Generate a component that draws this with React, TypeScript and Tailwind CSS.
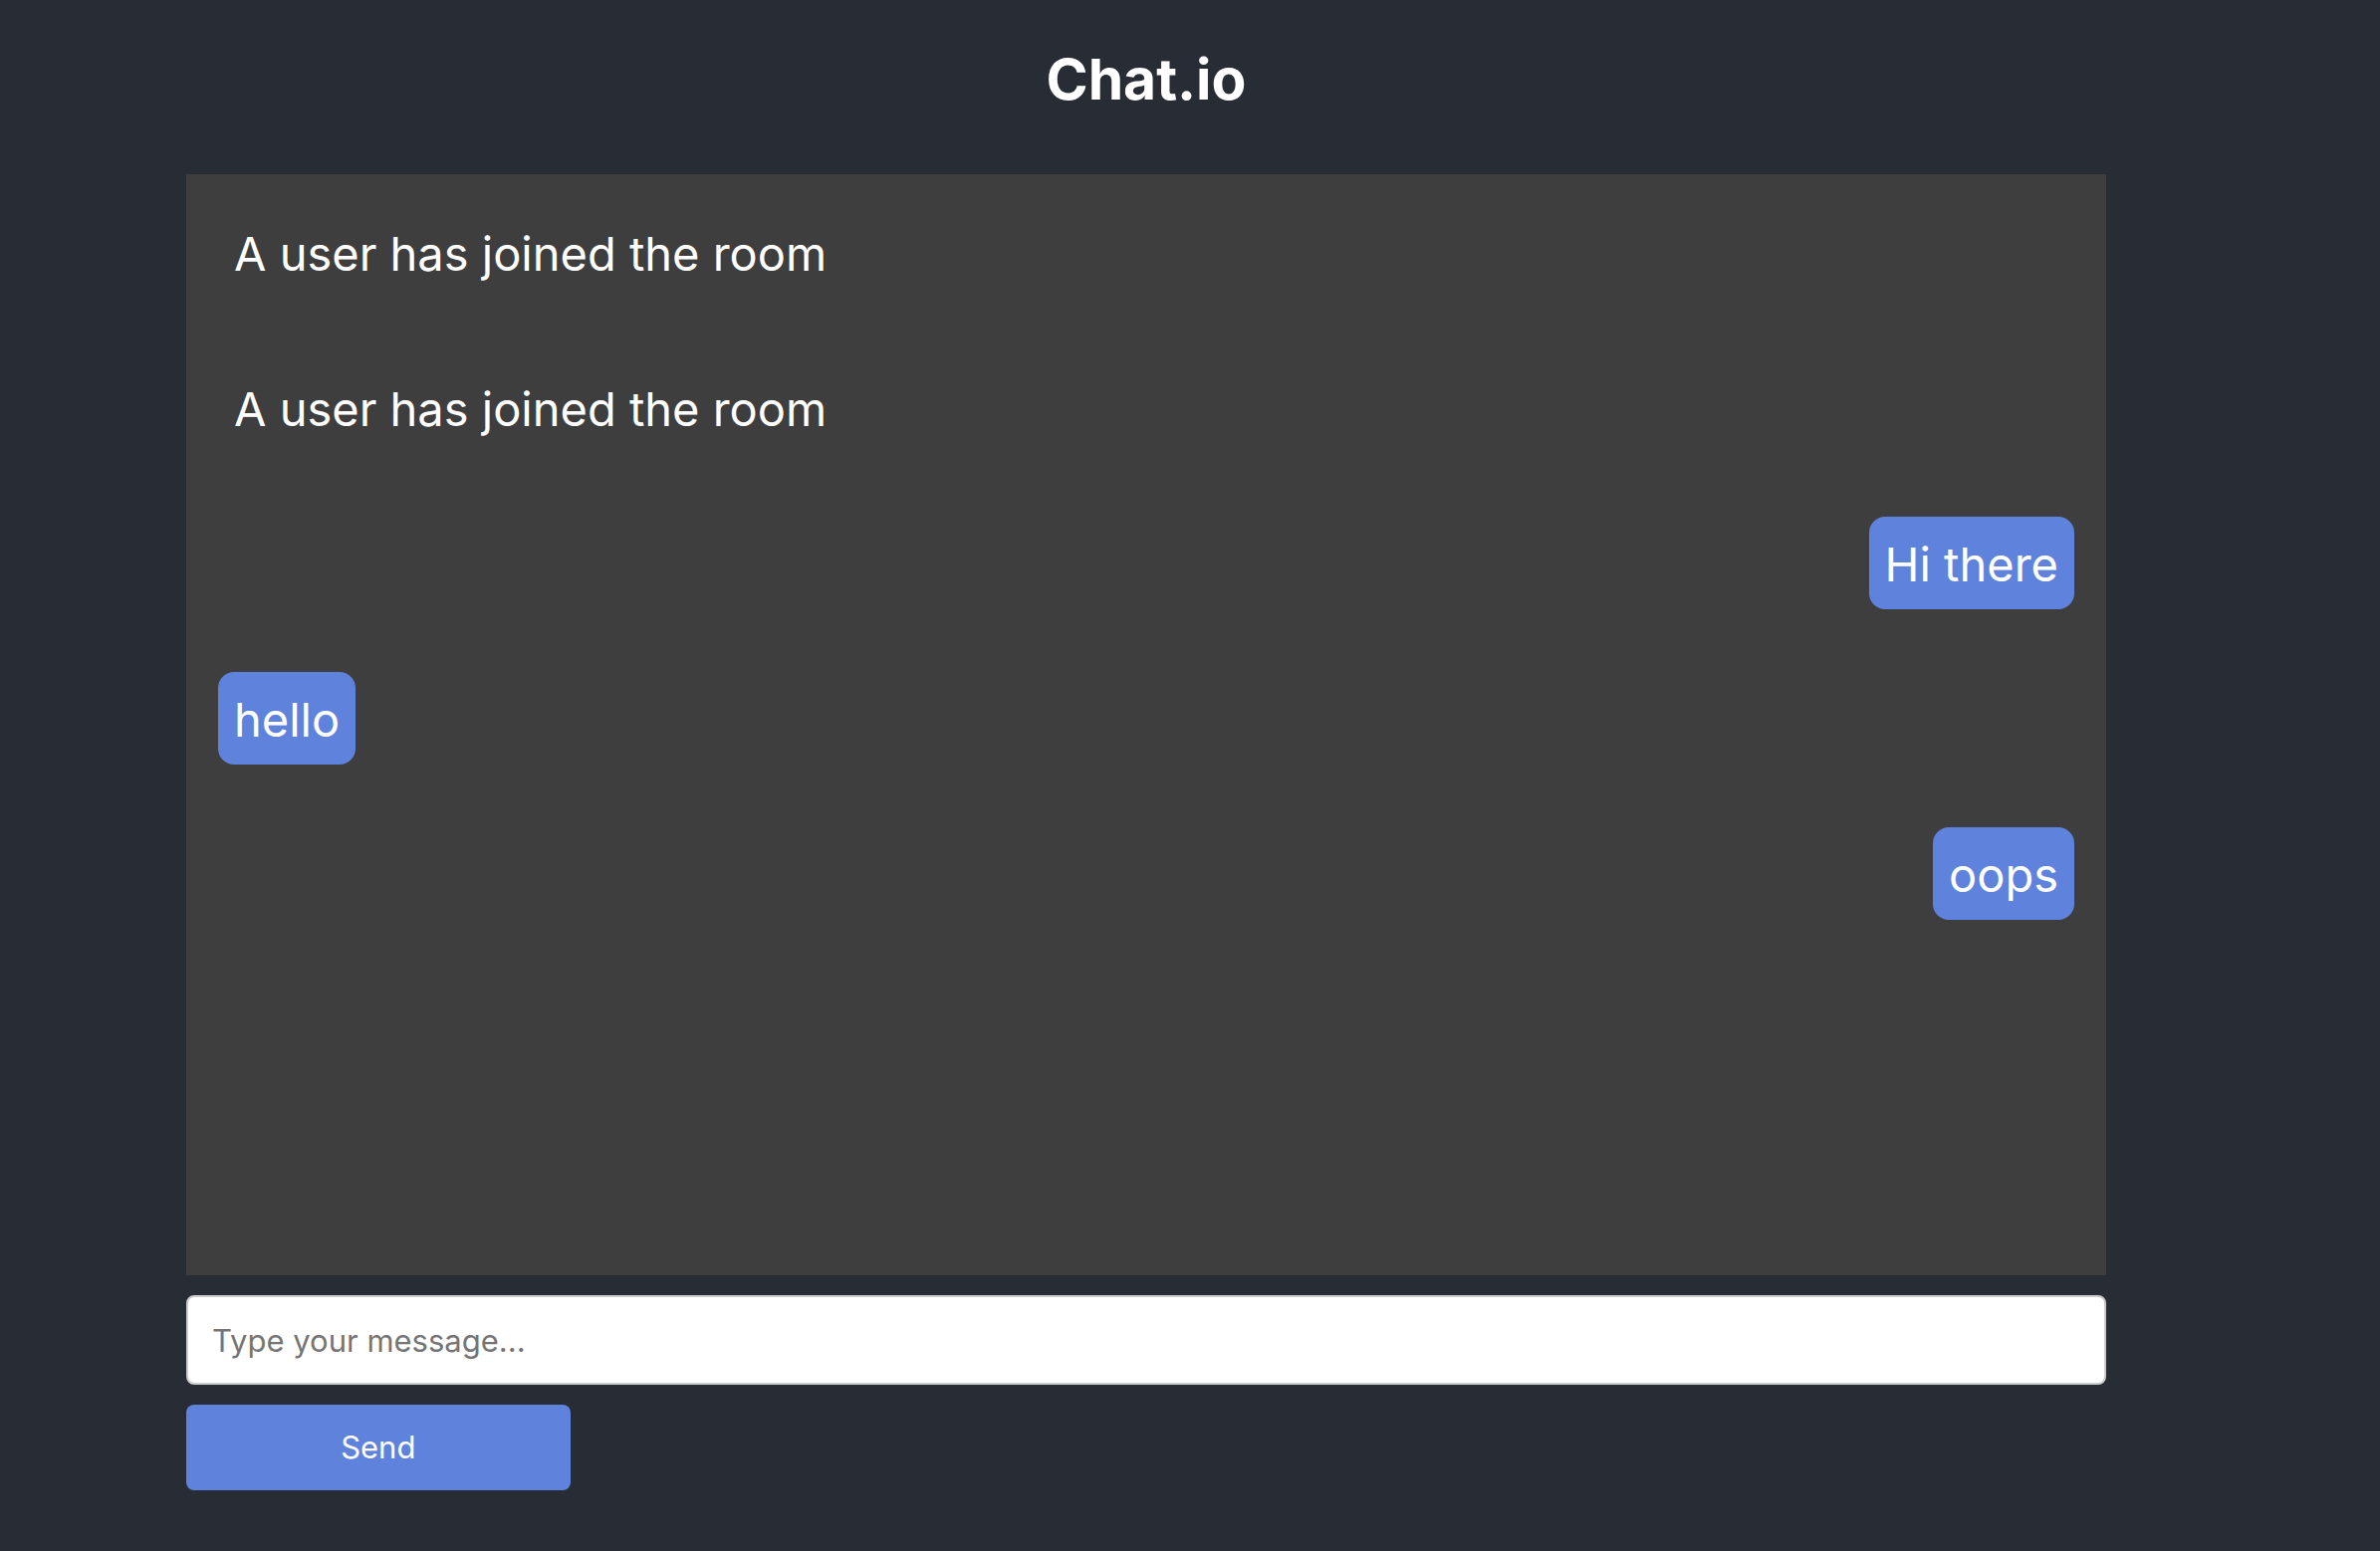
import { useState } from "react";

type Message = { text: string; kind: "notice" | "sent" | "received" };

const initialMessages: Message[] = [
  { text: "A user has joined the room", kind: "notice" },
  { text: "A user has joined the room", kind: "notice" },
  { text: "Hi there", kind: "sent" },
  { text: "hello", kind: "received" },
  { text: "oops", kind: "sent" },
];

const bubbleStyles = {
  notice: "self-start",
  sent: "self-end bg-[#5f83dc]",
  received: "self-start bg-[#5f83dc]",
};

function Bubble({ message }: { message: Message }) {
  return (
    <li className={`rounded-2xl px-4 pt-4 pb-[13px] text-[47px] leading-[64px] ${bubbleStyles[message.kind]}`}>
      {message.text}
    </li>
  );
}

export default function App() {
  const [messages, setMessages] = useState(initialMessages);
  const [draft, setDraft] = useState("");

  return (
    <main className="flex min-h-screen flex-col bg-[#282c34] pt-10 pr-[275px] pb-[61px] pl-[187px] font-['Inter',sans-serif] text-white">
      <h1 className="mb-[55px] text-center text-[57px] leading-[80px] font-bold">Chat.io</h1>
      <ul className="flex grow flex-col gap-[63px] bg-[#3e3e3e] p-8">
        {messages.map((message, index) => (
          <Bubble key={index} message={message} />
        ))}
      </ul>
      <form
        className="mt-5 flex flex-col gap-5"
        onSubmit={(event) => {
          event.preventDefault();
          if (!draft.trim()) return;
          setMessages([...messages, { text: draft, kind: "sent" }]);
          setDraft("");
        }}
      >
        <input
          type="text"
          aria-label="Message"
          placeholder="Type your message..."
          value={draft}
          onChange={(event) => setDraft(event.target.value)}
          className="h-[90px] w-full rounded-lg border-2 border-[#cccccc] bg-white px-6 text-[31px] text-black placeholder:text-[#757575]"
        />
        <button type="submit" className="h-[86px] w-1/5 rounded-lg bg-[#5f83dc] text-[31px]">
          Send
        </button>
      </form>
    </main>
  );
}
